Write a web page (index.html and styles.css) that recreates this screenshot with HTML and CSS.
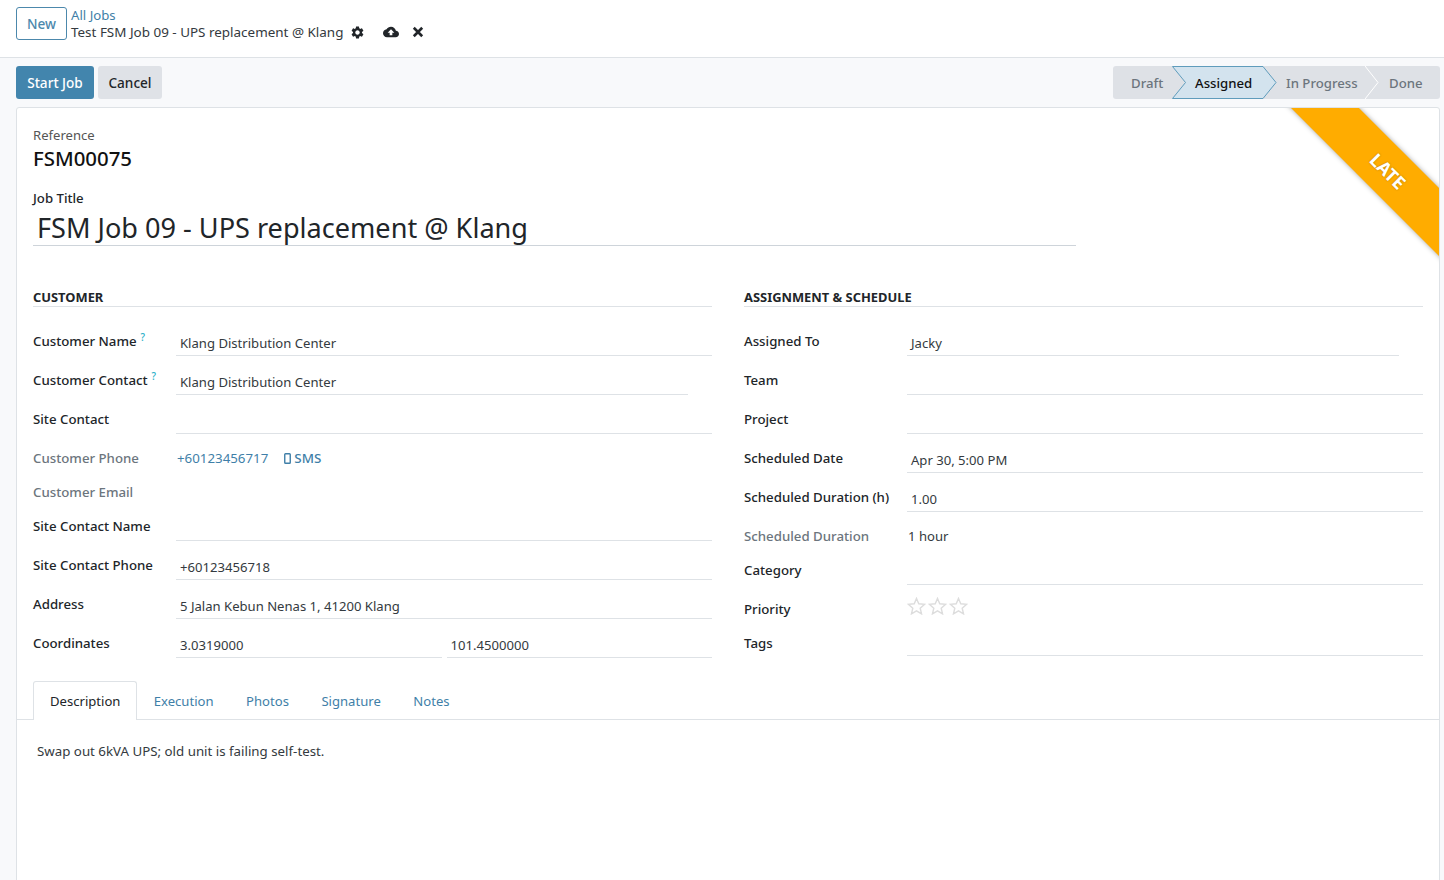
FILE: index.html
```html
<!DOCTYPE html>
<html>
<head>
    <meta name="viewport" content="width=device-width, initial-scale=1.0">
    <title>Test FSM Job 09</title>
    <link rel="stylesheet" href="styles.css">
</head>
<body>
<div class="page">
    <div class="topbar">
        <button class="btn-new">New</button>
        <div class="crumbs">
            <a class="crumb-link">All Jobs</a>
            <div class="crumb-current">
                <span>Test FSM Job 09 - UPS replacement @ Klang</span>
                <svg class="icon-gear" viewBox="0 0 24 24"><path d="M19.14 12.94c.04-.3.06-.61.06-.94 0-.32-.02-.64-.07-.94l2.03-1.58c.18-.14.23-.41.12-.61l-1.92-3.32c-.12-.22-.37-.29-.59-.22l-2.39.96c-.5-.38-1.03-.7-1.62-.94l-.36-2.54c-.04-.24-.24-.41-.48-.41h-3.84c-.24 0-.43.17-.47.41l-.36 2.54c-.59.24-1.13.57-1.62.94l-2.39-.96c-.22-.08-.47 0-.59.22L2.74 8.87c-.12.21-.08.47.12.61l2.03 1.58c-.05.3-.09.63-.09.94s.02.64.07.94l-2.03 1.58c-.18.14-.23.41-.12.61l1.92 3.32c.12.22.37.29.59.22l2.39-.96c.5.38 1.03.7 1.62.94l.36 2.54c.05.24.24.41.48.41h3.84c.24 0 .44-.17.47-.41l.36-2.54c.59-.24 1.13-.56 1.62-.94l2.39.96c.22.08.47 0 .59-.22l1.92-3.32c.12-.22.07-.47-.12-.61l-2.01-1.58zM12 15.6c-1.98 0-3.6-1.62-3.6-3.6s1.62-3.6 3.6-3.6 3.6 1.62 3.6 3.6-1.62 3.6-3.6 3.6z"/></svg>
                <svg class="icon-cloud" viewBox="0 0 24 24"><path d="M19.35 10.04C18.67 6.59 15.64 4 12 4 9.11 4 6.6 5.64 5.35 8.04 2.34 8.36 0 10.91 0 14c0 3.31 2.69 6 6 6h13c2.76 0 5-2.24 5-5 0-2.64-2.05-4.78-4.65-4.96zM14 13v4h-4v-4H7l5-5 5 5h-3z"/></svg>
                <svg class="icon-close" viewBox="0 0 10 10"><path d="M1.5 1.5l7 7M8.5 1.5l-7 7"/></svg>
            </div>
        </div>
    </div>

    <div class="controls">
        <div class="actions">
            <button class="btn btn-primary">Start Job</button>
            <button class="btn btn-light">Cancel</button>
        </div>
        <div class="statusbar">
            <div class="step step-draft">Draft</div>
            <div class="step step-current">
                <svg class="step-shape" viewBox="0 0 105 33"><polygon points="0.5,0.5 91,0.5 104,16.5 91,32.5 0.5,32.5 13.5,16.5"/></svg>
                <span>Assigned</span>
            </div>
            <div class="step step-progress">In Progress</div>
            <div class="step step-done">
                <svg class="step-sep" viewBox="0 0 14 33"><polyline points="0,0 13,16.5 0,33"/></svg>
                <span>Done</span>
            </div>
        </div>
    </div>

    <div class="sheet">
        <div class="ribbon">LATE</div>

        <div class="ref-label">Reference</div>
        <div class="ref-value">FSM00075</div>
        <div class="title-label">Job Title</div>
        <div class="title-input">FSM Job 09 - UPS replacement @ Klang</div>

        <div class="groups">
            <div class="group group-left">
                <div class="group-title">CUSTOMER</div>
                <div class="row">
                    <div class="label">Customer Name<sup class="help">?</sup></div>
                    <div class="value">Klang Distribution Center</div>
                </div>
                <div class="row">
                    <div class="label">Customer Contact<sup class="help">?</sup></div>
                    <div class="value value-short">Klang Distribution Center</div>
                </div>
                <div class="row">
                    <div class="label">Site Contact</div>
                    <div class="value"></div>
                </div>
                <div class="row">
                    <div class="label label-muted">Customer Phone</div>
                    <div class="plain">
                        <a class="phone">+60123456717</a>
                        <a class="sms">
                            <svg class="icon-mobile" viewBox="0 0 7 11"><rect x="0.75" y="0.75" width="5.5" height="9.5" rx="0.8"/></svg>
                            SMS
                        </a>
                    </div>
                </div>
                <div class="row row-short">
                    <div class="label label-muted">Customer Email</div>
                    <div class="plain"></div>
                </div>
                <div class="row row-short">
                    <div class="label">Site Contact Name</div>
                    <div class="value"></div>
                </div>
                <div class="row">
                    <div class="label">Site Contact Phone</div>
                    <div class="value">+60123456718</div>
                </div>
                <div class="row">
                    <div class="label">Address</div>
                    <div class="value">5 Jalan Kebun Nenas 1, 41200 Klang</div>
                </div>
                <div class="row">
                    <div class="label">Coordinates</div>
                    <div class="coords">
                        <div class="value">3.0319000</div>
                        <div class="value">101.4500000</div>
                    </div>
                </div>
            </div>

            <div class="group group-right">
                <div class="group-title">ASSIGNMENT &amp; SCHEDULE</div>
                <div class="row">
                    <div class="label">Assigned To</div>
                    <div class="value value-short">Jacky</div>
                </div>
                <div class="row">
                    <div class="label">Team</div>
                    <div class="value"></div>
                </div>
                <div class="row">
                    <div class="label">Project</div>
                    <div class="value"></div>
                </div>
                <div class="row">
                    <div class="label">Scheduled Date</div>
                    <div class="value">Apr 30, 5:00 PM</div>
                </div>
                <div class="row">
                    <div class="label">Scheduled Duration (h)</div>
                    <div class="value">1.00</div>
                </div>
                <div class="row">
                    <div class="label label-muted">Scheduled Duration</div>
                    <div class="plain">1 hour</div>
                </div>
                <div class="row row-short">
                    <div class="label">Category</div>
                    <div class="value"></div>
                </div>
                <div class="row">
                    <div class="label">Priority</div>
                    <div class="stars">
                        <svg class="star" viewBox="0 0 20 19"><polygon points="10,1.5 12.4,7.2 18.6,7.7 13.9,11.8 15.3,17.8 10,14.6 4.7,17.8 6.1,11.8 1.4,7.7 7.6,7.2"/></svg>
                        <svg class="star" viewBox="0 0 20 19"><polygon points="10,1.5 12.4,7.2 18.6,7.7 13.9,11.8 15.3,17.8 10,14.6 4.7,17.8 6.1,11.8 1.4,7.7 7.6,7.2"/></svg>
                        <svg class="star" viewBox="0 0 20 19"><polygon points="10,1.5 12.4,7.2 18.6,7.7 13.9,11.8 15.3,17.8 10,14.6 4.7,17.8 6.1,11.8 1.4,7.7 7.6,7.2"/></svg>
                    </div>
                </div>
                <div class="row row-tags">
                    <div class="label">Tags</div>
                    <div class="value"></div>
                </div>
            </div>
        </div>

        <div class="tabs">
            <a class="tab tab-active">Description</a>
            <a class="tab">Execution</a>
            <a class="tab">Photos</a>
            <a class="tab">Signature</a>
            <a class="tab">Notes</a>
        </div>
        <div class="tab-body">Swap out 6kVA UPS; old unit is failing self-test.</div>
    </div>
</div>
</body>
</html>
```

FILE: styles.css
```css
* {
    box-sizing: border-box;
}

html, body {
    margin: 0;
    height: 880px;
    overflow: hidden;
}

body {
    font-family: "Noto Sans", "Open Sans", sans-serif;
    font-size: 13.1px;
    line-height: 21px;
    color: #212529;
    background-color: #f8f9fb;
}

a {
    color: #3f7fa8;
    text-decoration: none;
}

svg {
    display: block;
    flex: none;
}

.page {
    display: flex;
    flex-direction: column;
    height: 890px;
}

/* top bar */

.topbar {
    display: flex;
    height: 58px;
    padding: 7px 0 0 16px;
    background-color: #fff;
    border-bottom: 1px solid #dee2e6;
}

.btn-new {
    width: 51px;
    height: 33px;
    padding: 0;
    border: 1px solid #4c88ac;
    border-radius: 3px;
    background-color: #fff;
    color: #4c88ac;
    font: 500 13.6px "Noto Sans", sans-serif;
}

.crumbs {
    margin-left: 4px;
}

.crumb-link {
    display: block;
    font-size: 13.2px;
    line-height: 16px;
}

.crumb-current {
    display: flex;
    align-items: center;
    height: 18px;
    font-size: 13.45px;
    color: #343a40;
}

.icon-gear {
    width: 15px;
    height: 15px;
    margin-left: 7px;
    fill: #212529;
}

.icon-cloud {
    width: 16px;
    height: 16px;
    margin-left: 18px;
    fill: #212529;
}

.icon-close {
    width: 12px;
    height: 12px;
    margin-left: 13px;
    fill: none;
    stroke: #212529;
    stroke-width: 2.2;
}

/* buttons and status */

.controls {
    display: flex;
    justify-content: space-between;
    height: 49px;
    padding: 8px 4px 0 16px;
}

.actions {
    display: flex;
    gap: 4px;
}

.btn {
    height: 33px;
    padding: 0;
    border: 0;
    border-radius: 3px;
    font: 500 13.6px "Noto Sans", sans-serif;
}

.btn-primary {
    width: 78px;
    background-color: #4285ad;
    color: #fff;
}

.btn-light {
    width: 64px;
    background-color: #dfe2e7;
    color: #212529;
}

.statusbar {
    display: flex;
    height: 33px;
    border-radius: 3px;
    background-color: #dee1e6;
    font-size: 13.2px;
    font-weight: 500;
    color: #6c757d;
}

.step {
    position: relative;
    line-height: 34px;
}

.step span {
    position: relative;
}

.step-draft {
    width: 59px;
    padding-left: 18px;
}

.step-current {
    width: 91px;
    padding-left: 23px;
    color: #111;
}

.step-progress {
    width: 102px;
    padding-left: 23px;
}

.step-done {
    width: 75px;
    padding-left: 24px;
}

.step-shape {
    position: absolute;
    left: 0;
    top: 0;
    width: 105px;
    height: 33px;
    fill: #d3e3ee;
    stroke: #5f9cbc;
}

.step-sep {
    position: absolute;
    left: 0;
    top: 0;
    width: 14px;
    height: 33px;
    fill: none;
    stroke: #fff;
}

/* sheet */

.sheet {
    position: relative;
    flex: 1;
    margin: 0 4px 0 16px;
    padding: 17px 16px 0;
    overflow: hidden;
    background-color: #fff;
    border: 1px solid #dee2e6;
    border-radius: 3px;
}

.ribbon {
    position: absolute;
    left: 1221px;
    top: 39px;
    width: 300px;
    height: 48px;
    transform: rotate(45deg);
    background-color: #ffac00;
    box-shadow: 0 0 5px rgba(0, 0, 0, 0.35);
    color: #fff;
    font-size: 18px;
    font-weight: 700;
    line-height: 48px;
    text-align: center;
    text-shadow: 0 0 2px rgba(0, 0, 0, 0.3);
}

.ref-label {
    color: #555;
}

.ref-value {
    margin-top: -1px;
    font-size: 20.4px;
    font-weight: 500;
    line-height: 26px;
    color: #111;
}

.title-label {
    margin-top: 17px;
    font-size: 13.2px;
    font-weight: 500;
}

.title-input {
    width: 1043px;
    height: 37px;
    padding-left: 4px;
    font-size: 27.1px;
    line-height: 38px;
    border-bottom: 1px solid #ced4da;
}

.groups {
    display: grid;
    grid-template-columns: 679px 679px;
    column-gap: 32px;
    margin-top: 41px;
}

.group-title {
    height: 20px;
    margin-bottom: 10px;
    font-size: 12.9px;
    font-weight: 700;
    line-height: 21px;
    border-bottom: 1px solid #dee2e6;
}

.row {
    display: flex;
    align-items: flex-end;
    height: 39px;
}

.row-short {
    height: 34px;
}

.row-tags {
    height: 32px;
}

.label {
    flex: none;
    width: 143px;
    padding-bottom: 4px;
    font-size: 13.25px;
    font-weight: 500;
}

.row-tags .label {
    padding-bottom: 2px;
}

.group-right .label {
    width: 163px;
}

.label-muted {
    color: #6c757d;
}

.help {
    margin-left: 4px;
    font-size: 10px;
    line-height: 0;
    color: #2bb0c8;
}

.value {
    flex: 1;
    height: 26px;
    padding: 3px 0 0 4px;
    border-bottom: 1px solid #dee2e6;
    color: #343a40;
}

.value-short {
    margin-right: 24px;
}

.plain {
    flex: 1;
    display: flex;
    align-items: flex-end;
    gap: 15px;
    padding: 0 0 4px 1px;
    min-height: 26px;
    color: #343a40;
}

.phone {
    font-size: 13.3px;
    line-height: 21px;
}

.sms {
    display: flex;
    align-items: center;
    gap: 3px;
    font-size: 13.4px;
    font-weight: 500;
}

.icon-mobile {
    width: 7px;
    height: 11px;
    margin-left: 1px;
    fill: none;
    stroke: #3f7fa8;
    stroke-width: 1.4;
}

.coords {
    flex: 1;
    display: flex;
    gap: 5px;
}

.stars {
    display: flex;
    gap: 2px;
    padding-bottom: 9px;
}

.star {
    width: 19px;
    height: 18px;
    fill: none;
    stroke: #ddd;
    stroke-width: 1.5;
}

/* tabs */

.tabs {
    display: flex;
    height: 39px;
    margin: 23px -16px 0;
    padding-left: 16px;
    border-bottom: 1px solid #dee2e6;
}

.tab {
    height: 39px;
    padding: 9px 15.25px 0;
    border: 1px solid transparent;
    border-bottom: 0;
}

.tab-active {
    padding: 9px 16px 0;
    background-color: #fff;
    border-color: #dee2e6;
    border-radius: 3px 3px 0 0;
    color: #212529;
}

.tab-body {
    padding: 21px 4px;
    font-size: 13.3px;
    color: #343a40;
}
```
